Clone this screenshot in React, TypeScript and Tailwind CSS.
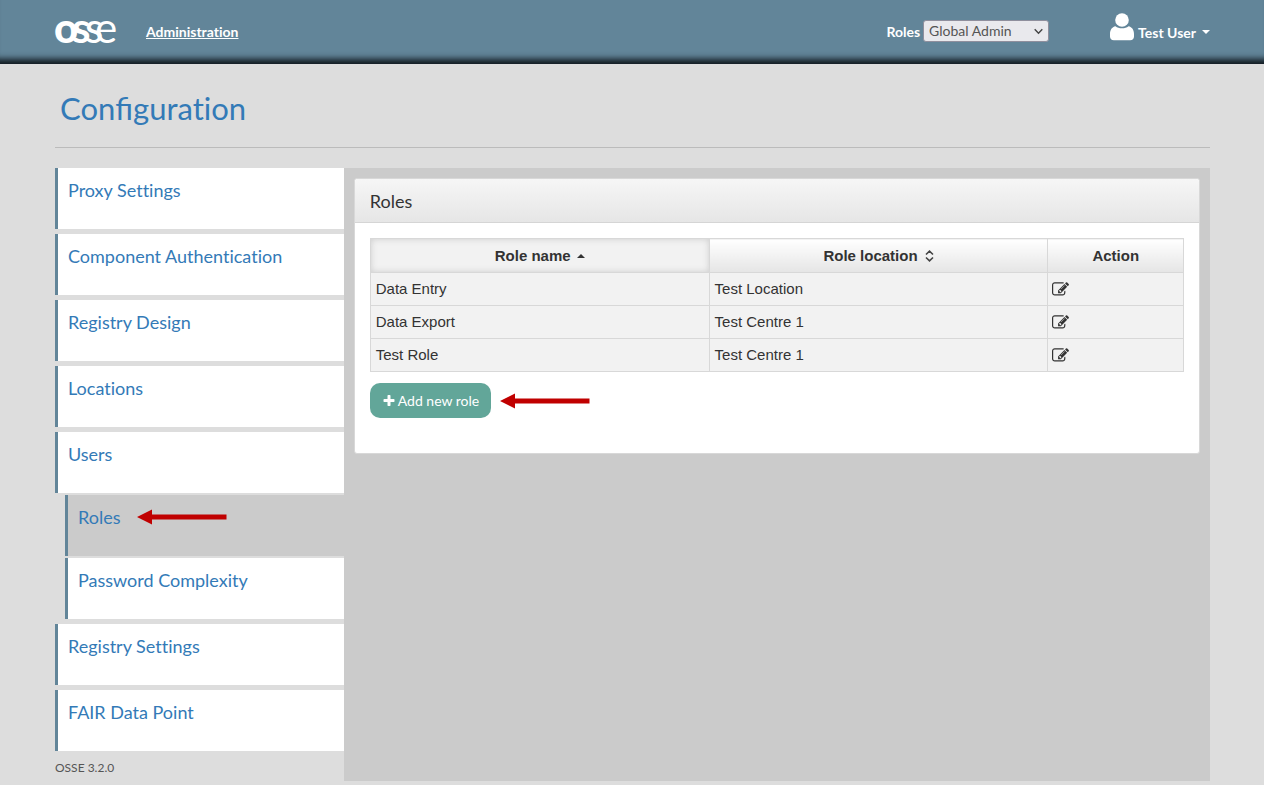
import { useState } from "react";

const menu = [
  { label: "Proxy Settings" },
  { label: "Component Authentication" },
  { label: "Registry Design" },
  { label: "Locations" },
  {
    label: "Users",
    children: [{ label: "Roles", active: true }, { label: "Password Complexity" }],
  },
  { label: "Registry Settings" },
  { label: "FAIR Data Point" },
];

const roles = [
  { name: "Data Entry", location: "Test Location" },
  { name: "Data Export", location: "Test Centre 1" },
  { name: "Test Role", location: "Test Centre 1" },
];

const Logo = () => (
  <svg
    width="64"
    height="60"
    viewBox="0 0 64 60"
    className="overflow-visible"
    fill="#fff"
    fontFamily="Lato"
    fontSize="42"
    role="img"
    aria-label="osse"
  >
    <text x="-1" y="42" fontWeight="900">o</text>
    <text x="17" y="42" fontWeight="700">s</text>
    <text x="30" y="42" fontWeight="500">s</text>
    <text x="40" y="42" fontWeight="400">e</text>
  </svg>
);

const UserIcon = () => (
  <svg width="24" height="28" viewBox="0 0 24 28" fill="#fff" aria-hidden="true">
    <circle cx="12" cy="7" r="6.8" />
    <path d="M5.5 13.2C7.2 14.6 9.4 15.3 12 15.3s4.800-.7 6.500-2.100C22 13.800 24 17 24 21v2.500c0 2.300-1.500 3.800-3.800 3.800H3.800C1.500 27.300 0 25.800 0 23.500V21c0-4 2-7.200 5.500-7.800z" />
  </svg>
);

const EditIcon = () => (
  <svg width="17" height="17" viewBox="0 0 1792 1792" fill="currentColor" aria-hidden="true">
    <path d="M888 1184l116-116-152-152-116 116v56h96v96h56zm440-720q-16-16-33 1l-350 350q-17 17-1 33t33-1l350-350q17-17 1-33zm80 594v190q0 119-84.5 203.5t-203.5 84.5h-832q-119 0-203.5-84.5t-84.5-203.5v-832q0-119 84.5-203.5t203.5-84.5h832q63 0 117 25 15 7 18 23 3 17-9 29l-49 49q-14 14-32 8-23-6-45-6h-832q-66 0-113 47t-47 113v832q0 66 47 113t113 47h832q66 0 113-47t47-113v-126q0-13 9-22l64-64q15-15 35-7t20 29zm-96-738l288 288-672 672h-288v-288zm444 132l-92 92-288-288 92-92q28-28 68-28t68 28l152 152q28 28 28 68t-28 68z" />
  </svg>
);

const PlusIcon = () => (
  <svg width="14" height="14" viewBox="0 0 1792 1792" fill="currentColor" aria-hidden="true">
    <path d="M1600 736v192q0 40-28 68t-68 28h-416v416q0 40-28 68t-68 28h-192q-40 0-68-28t-28-68v-416h-416q-40 0-68-28t-28-68v-192q0-40 28-68t68-28h416v-416q0-40 28-68t68-28h192q40 0 68 28t28 68v416h416q40 0 68 28t28 68z" />
  </svg>
);

const RedArrow = () => (
  <svg width="90" height="16" viewBox="0 0 90 16" fill="#c00000" aria-hidden="true">
    <path d="M0 8L15 .5V5.500H89.500V10.500H15V15.500z" />
  </svg>
);

const MenuItem = ({ label, active }: { label: string; active?: boolean }) => (
  <div
    className={`h-[61px] border-l-3 border-[#628599] pl-[10px] pt-2 flex items-start gap-[17px] ${
      active ? "bg-[#cbcbcb]" : "bg-white"
    }`}
  >
    <a href="#" className="text-[18px] leading-[28px] text-[#337ab7] hover:underline">
      {label}
    </a>
    {active && (
      <span className="pt-[6px]">
        <RedArrow />
      </span>
    )}
  </div>
);

const App = () => {
  const [role, setRole] = useState("Global Admin");

  return (
    <div className="min-h-screen bg-[#ddd] font-['Lato',sans-serif] text-[#333] [font-variant-ligatures:no-common-ligatures]">
      <header className="h-16 bg-[#628599] pl-[55px] pr-[54px] pb-[2px] flex items-center text-[14px] font-bold text-white shadow-[inset_0_-11px_6px_-6px_#111a20]">
        <Logo />
        <a href="#" className="ml-[27px] underline">
          Administration
        </a>
        <div className="ml-auto flex items-center gap-[3px]">
          <label htmlFor="role">Roles</label>
          <div className="relative">
            <select
              id="role"
              value={role}
              onChange={(e) => setRole(e.target.value)}
              className="block w-[126px] h-[22px] appearance-none rounded-[3px] border border-[#8f8f9d] bg-[#e9e9ed] pl-[5px] text-[14px] leading-[20px] font-normal text-[#555]"
            >
              <option>Global Admin</option>
            </select>
            <svg
              className="absolute right-[6px] top-[8px] pointer-events-none"
              width="9"
              height="7"
              viewBox="0 0 9 7"
              fill="none"
              stroke="#444"
              strokeWidth="1.400"
            >
              <path d="M.7 1.200L4.500 5.200L8.300 1.200" />
            </svg>
          </div>
        </div>
        <button type="button" className="ml-[61px] pt-[2px] flex items-center gap-1">
          <span className="pb-[10px]">
            <UserIcon />
          </span>
          Test User
          <svg className="ml-[2px]" width="8" height="4" viewBox="0 0 8 4" fill="#fff" aria-hidden="true">
            <path d="M0 0h8L4 4z" />
          </svg>
        </button>
      </header>

      <main className="pl-[55px] pr-[54px] pb-1">
        <h1 className="h-[84px] pt-6 pl-[5px] border-b border-[#bbb] text-[31px] leading-[40px] text-[#337ab7]">
          Con<span className="[font-variant-ligatures:common-ligatures]">fi</span>guration
        </h1>

        <div className="mt-5 flex">
          <aside className="w-1/4">
            <nav className="flex flex-col gap-[5px]">
              {menu.map((item) => (
                <div key={item.label} className="flex flex-col gap-[2px]">
                  <MenuItem label={item.label} />
                  {item.children?.map((child) => (
                    <div key={child.label} className="pl-[10px]">
                      <MenuItem label={child.label} active={child.active} />
                    </div>
                  ))}
                </div>
              ))}
            </nav>
            <p className="pt-[9px] pb-[5px] text-[12px] leading-[16px] text-[#555]">OSSE 3.2.0</p>
          </aside>

          <section className="flex-1 bg-[#cbcbcb] p-[10px]">
            <div className="rounded-[3px] border border-[#d8d8d8] bg-white">
              <h2 className="h-[44px] pl-[15px] rounded-t-[3px] border-b border-[#d5d5d5] bg-linear-to-b from-[#f6f6f6] to-[#e6e6e6] text-[18px] leading-[44px]">
                Roles
              </h2>
              <div className="p-[15px] pb-[35px]">
                <table className="w-full table-fixed border-collapse font-['Liberation_Sans',Arial,sans-serif] text-[15px] leading-[22px] text-[#333]">
                  <thead>
                    <tr className="h-[34px]">
                      <th className="w-5/12 border border-[#d8d8d8] bg-[#f2f2f2] shadow-[inset_0_0_6px_#ccc]">
                        <button type="button" className="inline-flex items-center gap-[6px] font-bold">
                          Role name
                          <svg width="8" height="4" viewBox="0 0 8 4" fill="#333" aria-hidden="true">
                            <path d="M0 4h8L4 0z" />
                          </svg>
                        </button>
                      </th>
                      <th className="w-5/12 border border-[#d8d8d8] bg-linear-to-b from-white to-[#e5e5e5]">
                        <button type="button" className="inline-flex items-center gap-[7px] font-bold">
                          Role location
                          <svg
                            width="9"
                            height="12"
                            viewBox="0 0 9 12"
                            fill="none"
                            stroke="#444"
                            strokeWidth="1.600"
                            aria-hidden="true"
                          >
                            <path d="M1 4.500L4.500 1.200L8 4.500M1 7.500L4.500 10.800L8 7.500" />
                          </svg>
                        </button>
                      </th>
                      <th className="border border-[#d8d8d8] bg-linear-to-b from-white to-[#e5e5e5]">
                        Action
                      </th>
                    </tr>
                  </thead>
                  <tbody>
                    {roles.map((r) => (
                      <tr key={r.name} className="bg-[#f2f2f2]">
                        <td className="border border-[#d8d8d8] px-[5px] py-[5px]">{r.name}</td>
                        <td className="border border-[#d8d8d8] px-[5px] py-[5px]">{r.location}</td>
                        <td className="border border-[#d8d8d8] px-1 py-[5px]">
                          <button type="button" aria-label={`Edit ${r.name}`} className="block">
                            <EditIcon />
                          </button>
                        </td>
                      </tr>
                    ))}
                  </tbody>
                </table>
                <div className="mt-[11px] flex items-center gap-[9px]">
                  <button
                    type="button"
                    className="h-[35px] px-3 flex items-center gap-[2px] rounded-[10px] bg-[#62a699] text-[14px] text-white"
                  >
                    <PlusIcon />
                    Add new role
                  </button>
                  <RedArrow />
                </div>
              </div>
            </div>
          </section>
        </div>
      </main>
    </div>
  );
};

export default App;
